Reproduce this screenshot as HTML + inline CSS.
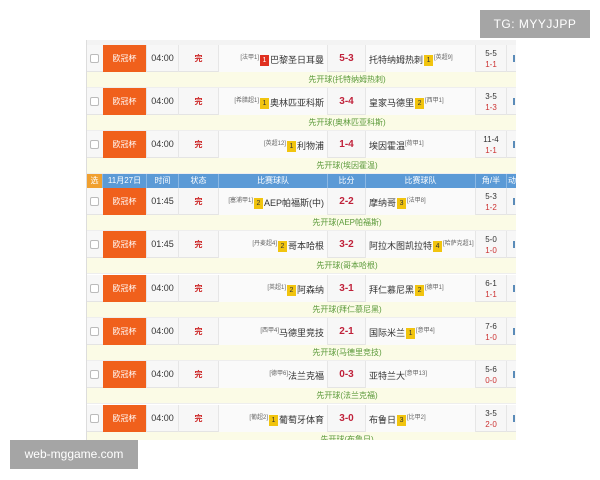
<!DOCTYPE html>
<html><head><meta charset="utf-8"><style>
*{margin:0;padding:0;box-sizing:border-box}
body{width:600px;height:480px;background:#fff;position:relative;overflow:hidden;font-family:"Liberation Sans","Noto Sans CJK SC",sans-serif}
#wrap{position:absolute;left:86px;top:40px;width:430px;height:400px;overflow:hidden;background:#fff;border-left:1px solid #ddd}
.r{position:absolute;left:0;width:430px;height:27px;background:#f7f7f7;border-bottom:1px solid #e4e4e4;font-size:9px;color:#333}
.r>div{position:absolute;top:0;height:27px;line-height:27px;border-right:1px solid #e6e6e6}
.cb{left:3px;top:9px!important;width:9px;height:9px!important;border:1px solid #bbb!important;border-radius:2px;background:#fff}
.lg{left:16px;width:44px;background:#f0601c;color:#fff;text-align:center;font-size:8px}
.tm{left:60px;width:32px;text-align:center}
.st{left:92px;width:40px;text-align:center;color:#c22;font-weight:bold;font-size:8px}
.hm{left:132px;width:109px;text-align:right;padding-right:3px;background:#fafafa}
.sc{left:241px;width:38px;text-align:center;color:#c0213a;font-weight:bold;font-size:10px}
.aw{left:279px;width:110px;padding-left:3px;background:#fafafa}
.cn{left:389px;width:31px;text-align:center;line-height:11px!important;padding-top:3px;font-size:8px}
.cn span{color:#c33}
.ex{left:420px;width:10px;border:none!important}
.ex:after{content:"";position:absolute;left:6px;top:10px;width:2px;height:7px;background:#5a8bb8}
sup{font-size:6px;color:#666;vertical-align:4px}
.b{display:inline-block;width:9px;height:11px;line-height:11px;background:#f1c40f;color:#333;font-size:7px;text-align:center;vertical-align:middle;margin:0 1px}
.b.red{background:#e03020;color:#fff}
.s{position:absolute;left:0;width:430px;height:16px;line-height:16px;background:#fbfbe6;color:#5b9a3a;font-size:8px;text-align:center;padding-left:90px;border-bottom:1px solid #eee}
.h{position:absolute;left:0;top:134px;width:430px;height:14px;background:#5b9ad6;color:#fff;font-size:8px;line-height:14px}
.h>div{position:absolute;top:0;height:14px;text-align:center;border-right:1px solid #8bb8e4}
.tag{position:absolute;background:#a5a5a5;color:#fff;font-size:12px;text-align:center}
</style></head><body>
<div id="wrap">
<div style="position:absolute;left:0;top:0;width:430px;height:5px;background:#f3f3f3"></div>

<div class="r" style="top:5px"><div class="cb"></div><div class="lg">欧冠杯</div><div class="tm">04:00</div><div class="st">完</div><div class="hm"><sup>[法甲1]</sup><span class="b red">1</span>巴黎圣日耳曼</div><div class="sc">5-3</div><div class="aw">托特纳姆热刺<span class="b">1</span><sup>[英超9]</sup></div><div class="cn">5-5<br><span>1-1</span></div><div class="ex"></div></div>
<div class="s" style="top:32px">先开球(托特纳姆热刺)</div>

<div class="r" style="top:48px"><div class="cb"></div><div class="lg">欧冠杯</div><div class="tm">04:00</div><div class="st">完</div><div class="hm"><sup>[希腊超1]</sup><span class="b">1</span>奥林匹亚科斯</div><div class="sc">3-4</div><div class="aw">皇家马德里<span class="b">2</span><sup>[西甲1]</sup></div><div class="cn">3-5<br><span>1-3</span></div><div class="ex"></div></div>
<div class="s" style="top:75px">先开球(奥林匹亚科斯)</div>

<div class="r" style="top:91px"><div class="cb"></div><div class="lg">欧冠杯</div><div class="tm">04:00</div><div class="st">完</div><div class="hm"><sup>[英超12]</sup><span class="b">1</span>利物浦</div><div class="sc">1-4</div><div class="aw">埃因霍温<sup>[荷甲1]</sup></div><div class="cn">11-4<br><span>1-1</span></div><div class="ex"></div></div>
<div class="s" style="top:118px">先开球(埃因霍温)</div>

<div class="h"><div style="left:0;width:16px;background:#f0a030">选</div><div style="left:16px;width:44px">11月27日</div><div style="left:60px;width:32px">时间</div><div style="left:92px;width:40px">状态</div><div style="left:132px;width:109px">比赛球队</div><div style="left:241px;width:38px">比分</div><div style="left:279px;width:110px">比赛球队</div><div style="left:389px;width:31px">角/半</div><div style="left:420px;width:10px;border:none">动</div></div>

<div class="r" style="top:148px"><div class="cb"></div><div class="lg">欧冠杯</div><div class="tm">01:45</div><div class="st">完</div><div class="hm"><sup>[塞浦甲1]</sup><span class="b">2</span>AEP帕福斯(中)</div><div class="sc">2-2</div><div class="aw">摩纳哥<span class="b">3</span><sup>[法甲8]</sup></div><div class="cn">5-3<br><span>1-2</span></div><div class="ex"></div></div>
<div class="s" style="top:175px">先开球(AEP帕福斯)</div>

<div class="r" style="top:191px"><div class="cb"></div><div class="lg">欧冠杯</div><div class="tm">01:45</div><div class="st">完</div><div class="hm"><sup>[丹麦超4]</sup><span class="b">2</span>哥本哈根</div><div class="sc">3-2</div><div class="aw">阿拉木图凯拉特<span class="b">4</span><sup>[哈萨克超1]</sup></div><div class="cn">5-0<br><span>1-0</span></div><div class="ex"></div></div>
<div class="s" style="top:218px">先开球(哥本哈根)</div>

<div class="r" style="top:235px"><div class="cb"></div><div class="lg">欧冠杯</div><div class="tm">04:00</div><div class="st">完</div><div class="hm"><sup>[英超1]</sup><span class="b">2</span>阿森纳</div><div class="sc">3-1</div><div class="aw">拜仁慕尼黑<span class="b">2</span><sup>[德甲1]</sup></div><div class="cn">6-1<br><span>1-1</span></div><div class="ex"></div></div>
<div class="s" style="top:262px">先开球(拜仁慕尼黑)</div>

<div class="r" style="top:278px"><div class="cb"></div><div class="lg">欧冠杯</div><div class="tm">04:00</div><div class="st">完</div><div class="hm"><sup>[西甲4]</sup>马德里竞技</div><div class="sc">2-1</div><div class="aw">国际米兰<span class="b">1</span><sup>[意甲4]</sup></div><div class="cn">7-6<br><span>1-0</span></div><div class="ex"></div></div>
<div class="s" style="top:305px">先开球(马德里竞技)</div>

<div class="r" style="top:321px"><div class="cb"></div><div class="lg">欧冠杯</div><div class="tm">04:00</div><div class="st">完</div><div class="hm"><sup>[德甲6]</sup>法兰克福</div><div class="sc">0-3</div><div class="aw">亚特兰大<sup>[意甲13]</sup></div><div class="cn">5-6<br><span>0-0</span></div><div class="ex"></div></div>
<div class="s" style="top:348px">先开球(法兰克福)</div>

<div class="r" style="top:365px"><div class="cb"></div><div class="lg">欧冠杯</div><div class="tm">04:00</div><div class="st">完</div><div class="hm"><sup>[葡超2]</sup><span class="b">1</span>葡萄牙体育</div><div class="sc">3-0</div><div class="aw">布鲁日<span class="b">3</span><sup>[比甲2]</sup></div><div class="cn">3-5<br><span>2-0</span></div><div class="ex"></div></div>
<div class="s" style="top:392px">先开球(布鲁日)</div>
</div>

<div class="tag" style="left:480px;top:10px;width:110px;height:28px;line-height:28px;font-size:12px;letter-spacing:0.5px">TG: MYYJJPP</div>
<div class="tag" style="left:10px;top:440px;width:128px;height:29px;line-height:29px">web-mggame.com</div>
</body></html>
